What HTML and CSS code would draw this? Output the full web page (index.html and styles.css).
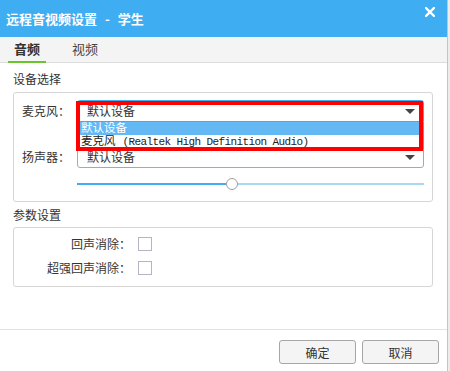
FILE: index.html
```html
<!DOCTYPE html>
<html lang="zh-CN">
<head>
  <meta charset="UTF-8" />
  <meta name="viewport" content="width=device-width, initial-scale=1.0"/>
  <title>远程音视频设置 - 学生</title>
  <link rel="stylesheet" href="styles.css">
</head>
<body>
  <div class="dialog">
    <!-- Title bar -->
    <div class="titlebar">
      <span class="title">远程音视频设置<span class="dash">-</span>学生</span>
      <span class="close">
        <svg width="10" height="10" viewBox="0 0 10 10">
          <path d="M1 1L9 9M9 1L1 9" stroke="#fff" stroke-width="2.4" stroke-linecap="square"/>
        </svg>
      </span>
    </div>

    <!-- Tabs -->
    <div class="tabs">
      <div class="tab active">音频</div>
      <div class="tab">视频</div>
    </div>

    <div class="content">
      <div class="section-title">设备选择</div>
      <div class="group devices">
        <div class="row">
          <div class="label">麦克风：</div>
          <div class="field">
            <div class="select open">
              <span>默认设备</span>
              <i class="arrow"></i>
            </div>
            <ul class="dropdown">
              <li class="selected">默认设备</li>
              <li>麦克风 <span class="latin">(Realtek High Definition Audio)</span></li>
            </ul>
            <div class="mark"></div>
          </div>
        </div>
        <div class="row">
          <div class="label">扬声器：</div>
          <div class="field">
            <div class="select">
              <span>默认设备</span>
              <i class="arrow"></i>
            </div>
          </div>
        </div>
        <div class="slider">
          <div class="fill" style="width: 43%"></div>
          <div class="thumb"></div>
          <div class="rest"></div>
        </div>
      </div>

      <div class="section-title second">参数设置</div>
      <div class="group params">
        <div class="check-row">
          <div class="check-label">回声消除：</div>
          <span class="checkbox"></span>
        </div>
        <div class="check-row">
          <div class="check-label">超强回声消除：</div>
          <span class="checkbox"></span>
        </div>
      </div>
    </div>

    <div class="footer">
      <button class="btn">确定</button>
      <button class="btn">取消</button>
    </div>
  </div>
</body>
</html>
```

FILE: styles.css
```css
body {
  margin: 0;
  background: #ececec;
  font-family: "Noto Sans CJK SC", "Liberation Sans", sans-serif;
  font-size: 12px;
  color: #333;
}

.dialog {
  width: 447px;
  height: 371px;
  background: #fff;
  border-right: 1px solid #c4c4c4;
  display: flex;
  flex-direction: column;
}

.titlebar {
  height: 37px;
  background: #3fadf2;
  display: flex;
  align-items: center;
  justify-content: space-between;
  padding-left: 6px;
}

.title {
  color: #fff;
  font-size: 13px;
  font-weight: bold;
  line-height: 16px;
}

.title .dash {
  margin: 0 8px 0 8px;
}

.close {
  align-self: flex-start;
  margin-top: 7px;
  margin-right: 12px;
  height: 10px;
}

.close svg {
  display: block;
}

.tabs {
  height: 25px;
  background: #f4f4f4;
  border-bottom: 1px solid #dcdcdc;
  display: flex;
  gap: 20px;
  padding-left: 8px;
}

.tab {
  padding: 0 6px;
  font-size: 13px;
  line-height: 24px;
  color: #444;
}

.tab.active {
  font-weight: bold;
  color: #333;
  border-bottom: 2px solid #6ac52a;
  line-height: 24px;
  height: 24px;
  margin-bottom: -1px;
}

.content {
  flex: 1;
  padding: 0 14px 0 13px;
}

.section-title {
  line-height: 16px;
  margin: 8px 0 5px;
}

.section-title.second {
  margin: 5px 0 4px;
}

.group {
  border: 1px solid #d6d6d6;
  border-radius: 3px;
}

.devices {
  padding: 7px 8px 11px 8px;
}

.row {
  display: flex;
  align-items: center;
  margin-bottom: 24px;
}

.row + .row {
  margin-bottom: 10px;
}

.label {
  width: 55px;
  line-height: 16px;
}

.field {
  position: relative;
  flex: 1;
}

.select {
  height: 20px;
  border: 1px solid #a8a8a8;
  border-radius: 3px;
  display: flex;
  align-items: center;
  justify-content: space-between;
  padding: 0 8px 0 9px;
  line-height: 16px;
}

.select.open {
  border-color: #3fadf2;
  border-radius: 3px 3px 0 0;
}

.arrow {
  width: 0;
  height: 0;
  border-left: 5px solid transparent;
  border-right: 5px solid transparent;
  border-top: 5px solid #444;
}

.dropdown {
  position: absolute;
  top: 22px;
  left: 0;
  right: 0;
  margin: 0;
  padding: 0;
  list-style: none;
  background: #fff;
  border: 1px solid #3fadf2;
  border-top: none;
  z-index: 2;
}

.dropdown li {
  height: 13px;
  line-height: 13px;
  font-family: "Liberation Mono", "Noto Sans CJK SC", monospace;
  font-size: 11.5px;
  padding-left: 3px;
  white-space: nowrap;
  color: #222;
}

.dropdown li.selected {
  background: #64b9f4;
  color: #fff;
}

.latin {
  font-size: 11px;
  letter-spacing: -0.6px;
}

.mark {
  position: absolute;
  top: 1px;
  left: -1px;
  width: 339px;
  height: 42px;
  border: 4px solid #f00;
  z-index: 3;
}

.slider {
  margin-left: 55px;
  height: 12px;
  display: flex;
  align-items: center;
}

.fill {
  height: 2px;
  background: #3fadf2;
}

.rest {
  flex: 1;
  height: 2px;
  background: #a9d8f4;
}

.thumb {
  width: 10px;
  height: 10px;
  border: 1px solid #a0a0a0;
  border-radius: 50%;
  background: #fff;
}

.params {
  padding: 9px 0 11px 0;
}

.check-row {
  display: flex;
  align-items: center;
  height: 14px;
}

.check-row + .check-row {
  margin-top: 10px;
}

.check-label {
  width: 117px;
  text-align: right;
  margin-right: 7px;
  line-height: 14px;
}

.checkbox {
  width: 12px;
  height: 12px;
  border: 1px solid #b4b4c4;
  background: #fff;
}

.footer {
  border-top: 1px solid #e2e2e2;
  height: 42px;
  box-sizing: border-box;
  padding: 10px 8px 0 0;
  display: flex;
  justify-content: flex-end;
  gap: 6px;
}

.btn {
  width: 77px;
  height: 24px;
  border: 1px solid #a6a6a6;
  border-radius: 3px;
  background: #f4f4f4;
  font-family: "Noto Sans CJK SC", sans-serif;
  font-size: 12px;
  color: #333;
  padding: 0;
}
```
